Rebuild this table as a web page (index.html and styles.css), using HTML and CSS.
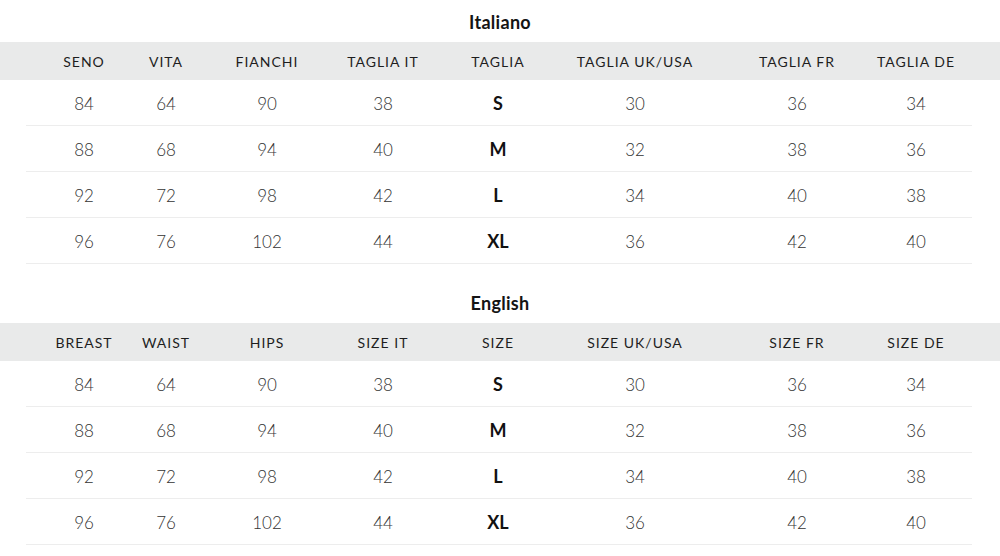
FILE: index.html
```html
<!DOCTYPE html>
<html lang="it">
<head>
<meta charset="utf-8">
<title>Tabella taglie</title>
<link rel="stylesheet" href="styles.css">
</head>
<body>
<section class="size-section">
  <h2 class="size-title">Italiano</h2>
  <div class="size-head">
    <div class="cols">
      <span>SENO</span><span>VITA</span><span>FIANCHI</span><span>TAGLIA IT</span><span>TAGLIA</span><span>TAGLIA UK/USA</span><span>TAGLIA FR</span><span>TAGLIA DE</span>
    </div>
  </div>
  <div class="size-row cols"><span>84</span><span>64</span><span>90</span><span>38</span><b>S</b><span>30</span><span>36</span><span>34</span></div>
  <div class="size-row cols"><span>88</span><span>68</span><span>94</span><span>40</span><b>M</b><span>32</span><span>38</span><span>36</span></div>
  <div class="size-row cols"><span>92</span><span>72</span><span>98</span><span>42</span><b>L</b><span>34</span><span>40</span><span>38</span></div>
  <div class="size-row cols"><span>96</span><span>76</span><span>102</span><span>44</span><b>XL</b><span>36</span><span>42</span><span>40</span></div>
</section>
<section class="size-section second">
  <h2 class="size-title">English</h2>
  <div class="size-head">
    <div class="cols">
      <span>BREAST</span><span>WAIST</span><span>HIPS</span><span>SIZE IT</span><span>SIZE</span><span>SIZE UK/USA</span><span>SIZE FR</span><span>SIZE DE</span>
    </div>
  </div>
  <div class="size-row cols"><span>84</span><span>64</span><span>90</span><span>38</span><b>S</b><span>30</span><span>36</span><span>34</span></div>
  <div class="size-row cols"><span>88</span><span>68</span><span>94</span><span>40</span><b>M</b><span>32</span><span>38</span><span>36</span></div>
  <div class="size-row cols"><span>92</span><span>72</span><span>98</span><span>42</span><b>L</b><span>34</span><span>40</span><span>38</span></div>
  <div class="size-row cols"><span>96</span><span>76</span><span>102</span><span>44</span><b>XL</b><span>36</span><span>42</span><span>40</span></div>
</section>
</body>
</html>
```
FILE: styles.css
```css
html, body {
  margin: 0;
  padding: 0;
  background: #ffffff;
}
body {
  font-family: Lato, "Open Sans", "Liberation Sans", sans-serif;
  color: #333333;
  width: 1000px;
}
.size-section.second {
  margin-top: 17px;
}
.size-title {
  margin: 0;
  height: 42px;
  line-height: 44px;
  text-align: center;
  font-size: 18px;
  font-weight: 700;
  color: #141414;
  letter-spacing: 0.3px;
}
.cols {
  display: grid;
  grid-template-columns: 64px 100px 102px 130px 100px 174px 150px 88px;
  align-items: center;
  justify-items: center;
  white-space: nowrap;
}
.size-head {
  background: #e9eaea;
  height: 38px;
  padding: 0 40px 0 52px;
  display: flex;
  align-items: center;
}
.size-head .cols {
  width: 908px;
  font-size: 14px;
  font-weight: 400;
  letter-spacing: 1px;
  color: #1e1e1e;
  padding-top: 1px;
}
.size-row {
  margin: 0 28px 0 26px;
  padding: 1px 12px 0 26px;
  height: 44px;
  border-bottom: 1px solid #ededed;
  font-size: 17px;
  font-weight: 300;
  color: #333333;
  box-sizing: content-box;
}
.size-row > b {
  font-size: 18px;
  font-weight: 700;
  color: #111111;
}
```
